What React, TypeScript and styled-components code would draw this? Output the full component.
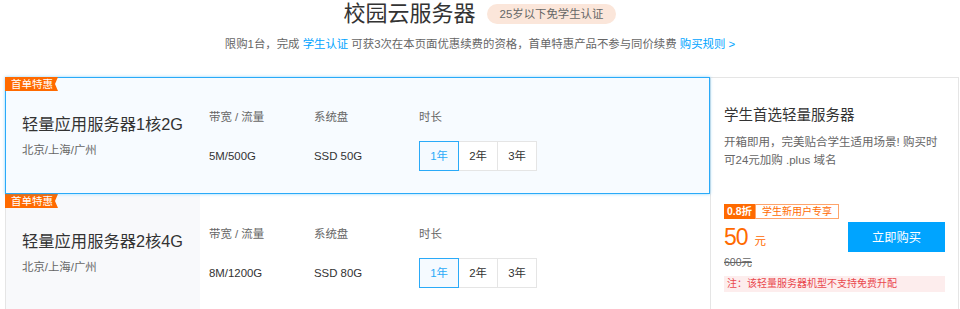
import styled, { createGlobalStyle } from "styled-components";

const GlobalStyle = createGlobalStyle`
    body {
        margin: 0;
        background: #fff;
        color: #333;
        font-family: "Liberation Sans", "Noto Sans CJK SC", sans-serif;
    }
`

type Product = {
    name: string;
    bandwidth: string;
    disk: string;
    active: boolean;
}

const products: Product[] = [
    { name: "轻量应用服务器1核2G", bandwidth: "5M/500G", disk: "SSD 50G", active: true },
    { name: "轻量应用服务器2核4G", bandwidth: "8M/1200G", disk: "SSD 80G", active: false },
];

const durations = ["1年", "2年", "3年"];

const App = () => {
    return (
        <Page>
            <GlobalStyle />
            <Header>
                <Title>校园云服务器</Title>
                <AgeBadge>25岁以下免学生认证</AgeBadge>
            </Header>
            <Notice>
                限购1台，完成 <NoticeLink>学生认证</NoticeLink> 可获3次在本页面优惠续费的资格，首单特惠产品不参与同价续费 <NoticeLink>购买规则 &gt;</NoticeLink>
            </Notice>
            <Section>
                <CardList>
                    {products.map((p) => (
                        <Card key={p.name} $active={p.active}>
                            <Ribbon>首单特惠</Ribbon>
                            <Info $active={p.active}>
                                <ProductName>{p.name}</ProductName>
                                <Region>北京/上海/广州</Region>
                            </Info>
                            <Specs>
                                <SpecCol>
                                    <SpecLabel>带宽 / 流量</SpecLabel>
                                    <SpecValue>{p.bandwidth}</SpecValue>
                                </SpecCol>
                                <SpecCol>
                                    <SpecLabel>系统盘</SpecLabel>
                                    <SpecValue>{p.disk}</SpecValue>
                                </SpecCol>
                                <DurationCol>
                                    <SpecLabel>时长</SpecLabel>
                                    <Durations>
                                        {durations.map((d, i) => (
                                            <DurationButton key={d} $active={i === 0}>{d}</DurationButton>
                                        ))}
                                    </Durations>
                                </DurationCol>
                            </Specs>
                        </Card>
                    ))}
                </CardList>
                <Aside>
                    <AsideTitle>学生首选轻量服务器</AsideTitle>
                    <AsideDesc>开箱即用，完美贴合学生适用场景! 购买时可24元加购 .plus 域名</AsideDesc>
                    <TagRow>
                        <DiscountTag>0.8折</DiscountTag>
                        <PromoTag>学生新用户专享</PromoTag>
                    </TagRow>
                    <PriceRow>
                        <Price>
                            <PriceNum>50</PriceNum>
                            <PriceUnit>元</PriceUnit>
                        </Price>
                        <BuyButton>立即购买</BuyButton>
                    </PriceRow>
                    <OrigPrice>600元</OrigPrice>
                    <Note>注：该轻量服务器机型不支持免费升配</Note>
                </Aside>
            </Section>
        </Page>
    )
}

const Page = styled.div`
    width: 960px;
`
const Header = styled.div`
    display: flex;
    justify-content: center;
    align-items: center;
    gap: 11px;
    height: 28px;
`
const Title = styled.h1`
    margin: 0;
    font-size: 22px;
    font-weight: normal;
    line-height: 28px;
    color: #333;
`
const AgeBadge = styled.span`
    height: 20px;
    line-height: 20px;
    padding: 0 13px;
    border-radius: 10px;
    background: #fbe6da;
    color: #666;
    font-size: 11.4px;
`
const Notice = styled.p`
    margin: 7px 0 0;
    text-align: center;
    font-size: 11.4px;
    line-height: 18px;
    color: #666;
`
const NoticeLink = styled.a`
    color: #00a4ff;
    text-decoration: none;
`
const Section = styled.div`
    display: flex;
    margin-top: 24px;
    padding-left: 5px;
`
const CardList = styled.div`
    width: 705px;
    flex-shrink: 0;
`
const Card = styled.div<{ $active: boolean }>`
    position: relative;
    z-index: ${p => p.$active ? 1 : 0};
    display: flex;
    height: 117px;
    box-sizing: border-box;
    border-width: 1px;
    border-style: solid;
    border-color: ${p => p.$active ? "#2aaaf8" : "transparent transparent transparent #e5e5e5"};
    background: ${p => p.$active ? "#f7fbff" : "#fff"};
    box-shadow: ${p => p.$active ? "0 0 3px rgba(0, 164, 255, 0.45)" : "none"};
`
const Ribbon = styled.span`
    position: absolute;
    top: -1px;
    left: -1px;
    width: 53px;
    height: 14px;
    box-sizing: border-box;
    padding-left: 6px;
    line-height: 14px;
    font-size: 10.5px;
    color: #fff;
    background: #ff6a00;
    clip-path: polygon(0 0, 100% 0, calc(100% - 3px) 50%, 100% 100%, 0 100%);
`
const Info = styled.div<{ $active: boolean }>`
    width: 194px;
    flex-shrink: 0;
    box-sizing: border-box;
    padding: 34px 0 0 16px;
    background: ${p => p.$active ? "transparent" : "#f8f9fb"};
`
const ProductName = styled.div`
    font-size: 16.3px;
    line-height: 24px;
    color: #333;
    white-space: nowrap;
`
const Region = styled.div`
    margin-top: 5px;
    font-size: 11.4px;
    line-height: 18px;
    color: #666;
`
const Specs = styled.div`
    display: flex;
    flex: 1;
    padding-left: 9px;
`
const SpecCol = styled.div`
    width: 105px;
    flex-shrink: 0;
    padding-top: 30px;
`
const DurationCol = styled(SpecCol)`
    width: auto;
    flex: 1;
`
const SpecLabel = styled.div`
    font-size: 11.4px;
    line-height: 18px;
    color: #666;
`
const SpecValue = styled.div`
    margin-top: 15px;
    font-size: 11.4px;
    line-height: 30px;
    color: #333;
`
const Durations = styled.div`
    display: flex;
    margin-top: 15px;
`
const DurationButton = styled.div<{ $active: boolean }>`
    position: relative;
    z-index: ${p => p.$active ? 1 : 0};
    flex-shrink: 0;
    width: 40px;
    height: 30px;
    box-sizing: border-box;
    margin-left: -1px;
    border: 1px solid ${p => p.$active ? "#2aaaf8" : "#e5e5e5"};
    background: ${p => p.$active ? "#f5faff" : "#fff"};
    color: ${p => p.$active ? "#2aaaf8" : "#333"};
    font-size: 11.4px;
    line-height: 28px;
    text-align: center;
    &:first-child {
        margin-left: 0;
    }
`
const Aside = styled.div`
    width: 249px;
    flex-shrink: 0;
    box-sizing: border-box;
    padding: 27px 13px 0;
    border: 1px solid #e5e5e5;
    border-bottom: none;
    background: #fff;
`
const AsideTitle = styled.div`
    font-size: 14.5px;
    line-height: 20px;
    color: #333;
`
const AsideDesc = styled.div`
    margin-top: 8px;
    font-size: 11.5px;
    line-height: 18px;
    color: #666;
`
const TagRow = styled.div`
    display: flex;
    height: 15px;
    margin-top: 35px;
`
const DiscountTag = styled.span`
    padding: 0 3px;
    background: #ff6a00;
    color: #fff;
    font-size: 10.5px;
    font-weight: bold;
    line-height: 15px;
`
const PromoTag = styled.span`
    box-sizing: border-box;
    padding: 0 6px;
    border: 1px solid #ffa46b;
    color: #ff6a00;
    font-size: 10px;
    line-height: 13px;
`
const PriceRow = styled.div`
    display: flex;
    justify-content: space-between;
    align-items: center;
    height: 30px;
    margin-top: 3px;
`
const Price = styled.div`
    display: flex;
    align-items: baseline;
    color: #ff6a00;
`
const PriceNum = styled.span`
    font-size: 23px;
    letter-spacing: -1px;
`
const PriceUnit = styled.span`
    margin-left: 7px;
    font-size: 11.5px;
`
const BuyButton = styled.button`
    width: 97px;
    height: 30px;
    border: none;
    background: #00a4ff;
    color: #fff;
    font-family: inherit;
    font-size: 12.3px;
`
const OrigPrice = styled.div`
    margin-top: 3px;
    font-size: 10.5px;
    line-height: 14px;
    color: #666;
    text-decoration: line-through;
`
const Note = styled.div`
    margin-top: 7px;
    height: 16px;
    padding-left: 3px;
    background: #fdeded;
    color: #e9484d;
    font-size: 10px;
    line-height: 16px;
`

export default App;
